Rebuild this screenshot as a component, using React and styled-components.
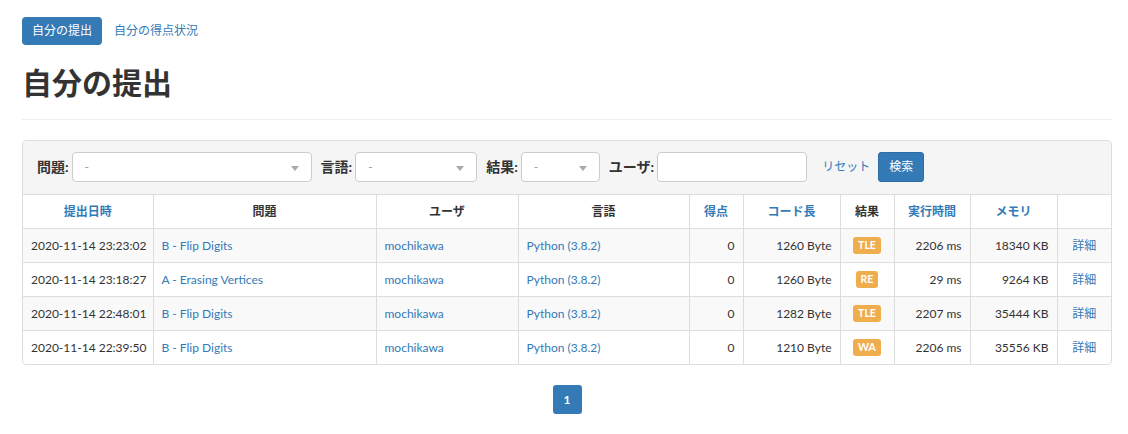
import React from 'react';
import styled, { createGlobalStyle } from 'styled-components';

const GlobalStyle = createGlobalStyle`
  body {
    margin: 0;
    background: #fff;
    color: #333;
    font-family: Lato, "Noto Sans CJK JP", sans-serif;
    font-size: 14px;
    line-height: 1.42857;
  }
  a {
    color: #337ab7;
    text-decoration: none;
  }
`;

const Page = styled.div`
  width: 1090px;
  padding: 17px 16px 20px 22px;
`;

const Pills = styled.ul`
  display: flex;
  gap: 2px;
  list-style: none;
  margin: 0;
  padding: 0;
`;

const Pill = styled.li`
  a {
    display: block;
    height: 28px;
    box-sizing: border-box;
    padding: 5px 10px;
    font-size: 12px;
    line-height: 18px;
    border-radius: 4px;
    color: ${p => (p.$active ? '#fff' : '#337ab7')};
    background: ${p => (p.$active ? '#337ab7' : 'transparent')};
  }
`;

const Title = styled.h2`
  margin: 21px 0 0;
  font-size: 30px;
  font-weight: 700;
  line-height: 33px;
  color: #333;
`;

const Rule = styled.hr`
  margin: 20px 0;
  border: 0;
  border-top: 1px solid #eee;
`;

const Panel = styled.div`
  border: 1px solid #ddd;
  border-radius: 4px;
  overflow: hidden;
`;

const Filters = styled.div`
  display: flex;
  align-items: center;
  padding: 11px 14px 12px;
  background: #f5f5f5;
`;

const Field = styled.div`
  display: flex;
  align-items: center;
  gap: 3px;
  margin-right: 9px;
`;

const Label = styled.label`
  font-size: 14px;
  font-weight: 700;
`;

const Select = styled.div`
  position: relative;
  box-sizing: border-box;
  width: ${p => p.$w}px;
  height: 30px;
  padding: 0 12px;
  background: #fff;
  border: 1px solid #ccc;
  border-radius: 4px;
  color: #999;
  font-size: 12px;
  line-height: 28px;
  &::after {
    content: '';
    position: absolute;
    right: 12px;
    top: 13px;
    border-style: solid;
    border-width: 5px 4px 0;
    border-color: #aaa transparent transparent;
  }
`;

const TextInput = styled.input`
  box-sizing: border-box;
  width: 150px;
  height: 30px;
  border: 1px solid #ccc;
  border-radius: 4px;
  background: #fff;
`;

const Reset = styled.a`
  margin: 0 8px 0 6px;
  font-size: 12px;
`;

const Button = styled.button`
  padding: 5px 10px;
  font-family: inherit;
  font-size: 12px;
  line-height: 18px;
  color: #fff;
  background: #337ab7;
  border: 1px solid #2e6da4;
  border-radius: 3px;
`;

const Table = styled.table`
  width: 100%;
  table-layout: fixed;
  border-collapse: collapse;
  font-size: 12px;
  th, td {
    padding: 8px;
    line-height: 17px;
    border: 1px solid #ddd;
    white-space: nowrap;
  }
  tr > :first-child { border-left: 0; }
  tr > :last-child { border-right: 0; }
  tbody tr:last-child td { border-bottom: 0; }
  tbody tr:nth-child(odd) { background: #f9f9f9; }
`;

const Th = styled.th`
  text-align: center;
  font-weight: 700;
  color: ${p => (p.$sort ? '#337ab7' : '#333')};
`;

const Td = styled.td`
  text-align: ${p => p.$align || 'left'};
`;

const Badge = styled.span`
  display: inline-block;
  padding: 3px 5px 3px;
  font-size: 10.5px;
  font-weight: 700;
  line-height: 1;
  color: #fff;
  background: #f0ad4e;
  border-radius: 3px;
  vertical-align: 1px;
`;

const Pager = styled.div`
  display: flex;
  justify-content: center;
  margin-top: 20px;
`;

const PageBox = styled.span`
  display: block;
  width: 29px;
  height: 29px;
  line-height: 29px;
  text-align: center;
  font-size: 12px;
  font-weight: 700;
  color: #fff;
  background: #337ab7;
  border-radius: 3px;
`;

const cols = [130, 223, 142, 171, 54, 97, 54, 76, 87];

const headers = [
  ['提出日時', true],
  ['問題', false],
  ['ユーザ', false],
  ['言語', false],
  ['得点', true],
  ['コード長', true],
  ['結果', false],
  ['実行時間', true],
  ['メモリ', true],
  ['', false],
];

const rows = [
  ['2020-11-14 23:23:02', 'B - Flip Digits', '1260 Byte', 'TLE', '2206 ms', '18340 KB'],
  ['2020-11-14 23:18:27', 'A - Erasing Vertices', '1260 Byte', 'RE', '29 ms', '9264 KB'],
  ['2020-11-14 22:48:01', 'B - Flip Digits', '1282 Byte', 'TLE', '2207 ms', '35444 KB'],
  ['2020-11-14 22:39:50', 'B - Flip Digits', '1210 Byte', 'WA', '2206 ms', '35556 KB'],
];

export default function App() {
  return (
    <Page>
      <GlobalStyle />
      <Pills>
        <Pill $active><a href="#">自分の提出</a></Pill>
        <Pill><a href="#">自分の得点状況</a></Pill>
      </Pills>
      <Title>自分の提出</Title>
      <Rule />
      <Panel>
        <Filters>
          <Field>
            <Label>問題:</Label>
            <Select $w={240}>-</Select>
          </Field>
          <Field>
            <Label>言語:</Label>
            <Select $w={122}>-</Select>
          </Field>
          <Field>
            <Label>結果:</Label>
            <Select $w={79}>-</Select>
          </Field>
          <Field>
            <Label>ユーザ:</Label>
            <TextInput />
          </Field>
          <Reset href="#">リセット</Reset>
          <Button>検索</Button>
        </Filters>
        <Table>
          <colgroup>
            {cols.map((w, i) => <col key={i} style={{ width: w }} />)}
            <col />
          </colgroup>
          <thead>
            <tr>
              {headers.map(([h, sort], i) => (
                <Th key={i} $sort={sort}>{h}</Th>
              ))}
            </tr>
          </thead>
          <tbody>
            {rows.map((r, i) => (
              <tr key={i}>
                <Td>{r[0]}</Td>
                <Td><a href="#">{r[1]}</a></Td>
                <Td><a href="#">mochikawa</a></Td>
                <Td><a href="#">Python (3.8.2)</a></Td>
                <Td $align="right">0</Td>
                <Td $align="right">{r[2]}</Td>
                <Td $align="center"><Badge>{r[3]}</Badge></Td>
                <Td $align="right">{r[4]}</Td>
                <Td $align="right">{r[5]}</Td>
                <Td $align="center"><a href="#">詳細</a></Td>
              </tr>
            ))}
          </tbody>
        </Table>
      </Panel>
      <Pager>
        <PageBox>1</PageBox>
      </Pager>
    </Page>
  );
}
